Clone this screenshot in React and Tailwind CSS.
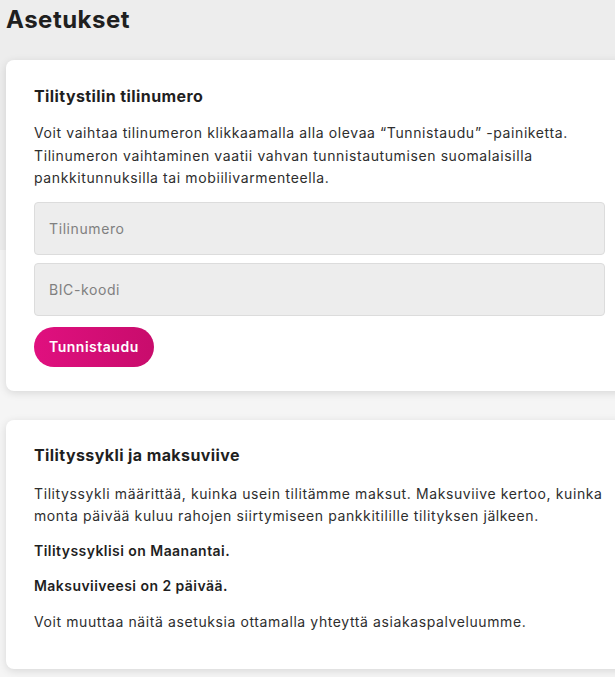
export default function App() {
  return (
    <div className="relative min-h-[677px] w-[615px] overflow-hidden bg-[#f5f5f5] font-['Inter',_sans-serif] text-[#2e2e2e]">
      <div className="absolute inset-x-0 top-0 h-[250px] bg-[#ededed]" />
      <div className="relative">
        <h1 className="px-[6px] pt-[4px] text-[24px] font-bold leading-[32px] tracking-[0.5px] text-[#1f1f1f]">Asetukset</h1>
        <div className="ml-[6px] mt-[24px] w-[627px] rounded-[8px] bg-white px-[28px] pb-[24px] pt-[24px] shadow-[0_2px_8px_rgba(0,0,0,0.12)]">
          <h2 className="text-[16px] font-bold leading-[24px] tracking-[0.4px] text-[#1f1f1f]">Tilitystilin tilinumero</h2>
          <p className="mt-[14px] text-[14px] leading-[22.5px] tracking-[0.6px]">
            Voit vaihtaa tilinumeron klikkaamalla alla olevaa “Tunnistaudu” -painiketta. Tilinumeron vaihtaminen vaatii vahvan tunnistautumisen suomalaisilla pankkitunnuksilla tai mobiilivarmenteella.
          </p>
          <div className="mt-[12px] flex flex-col gap-[8px]">
            <div className="flex h-[53px] items-center rounded-[4px] border border-[#dcdcdc] bg-[#ededed] px-[14px] text-[14px] tracking-[0.6px] text-[#808080]">Tilinumero</div>
            <div className="flex h-[53px] items-center rounded-[4px] border border-[#dcdcdc] bg-[#ededed] px-[14px] text-[14px] tracking-[0.6px] text-[#808080]">BIC-koodi</div>
          </div>
          <button className="mt-[11px] h-[40px] rounded-full bg-gradient-to-r from-[#e0107f] to-[#c80c6c] px-[15px] text-[14px] font-semibold tracking-[0.5px] text-white">Tunnistaudu</button>
        </div>
        <div className="ml-[6px] mt-[29px] w-[627px] rounded-[8px] bg-white px-[28px] pb-[36px] pt-[23px] shadow-[0_2px_8px_rgba(0,0,0,0.12)]">
          <h2 className="text-[16px] font-bold leading-[24px] tracking-[0.4px] text-[#1f1f1f]">Tilityssykli ja maksuviive</h2>
          <p className="mt-[16px] text-[14px] leading-[22.5px] tracking-[0.6px]">
            Tilityssykli määrittää, kuinka usein tilitämme maksut. Maksuviive kertoo, kuinka monta päivää kuluu rahojen siirtymiseen pankkitilille tilityksen jälkeen.
          </p>
          <p className="mt-[12px] text-[14px] font-semibold leading-[22.5px] tracking-[0.45px] text-[#1f1f1f]">Tilityssyklisi on Maanantai.</p>
          <p className="mt-[13px] text-[14px] font-semibold leading-[22.5px] tracking-[0.45px] text-[#1f1f1f]">Maksuviiveesi on 2 päivää.</p>
          <p className="mt-[13px] text-[14px] leading-[22.5px] tracking-[0.6px]">Voit muuttaa näitä asetuksia ottamalla yhteyttä asiakaspalveluumme.</p>
        </div>
      </div>
    </div>
  );
}
